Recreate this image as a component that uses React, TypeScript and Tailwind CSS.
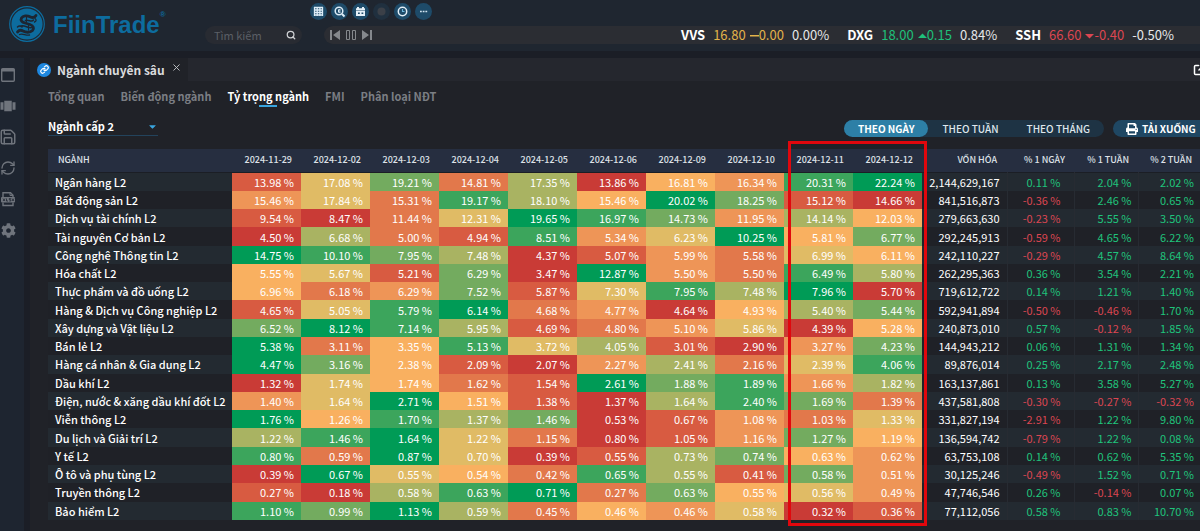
import { useState } from "react";
import { Link, RefreshCw, Save, Search, SquareArrowOutUpRight, X } from "lucide-react";
import { FaCaretDown, FaCog, FaPrint } from "react-icons/fa";
import { MdViewCarousel } from "react-icons/md";
import clsx from "clsx";

type Sector = {
  name: string;
  weights: number[];
  cap: string;
  changes: [number, number, number];
};

type Quote = {
  symbol: string;
  price: string;
  change: string;
  percent: string;
  trend: "up" | "down" | "flat";
};

const DATES = [
  "2024-11-29",
  "2024-12-02",
  "2024-12-03",
  "2024-12-04",
  "2024-12-05",
  "2024-12-06",
  "2024-12-09",
  "2024-12-10",
  "2024-12-11",
  "2024-12-12",
];

// highest weight of the row first
const HEAT = [
  "bg-[#009b56]",
  "bg-[#3ca55c]",
  "bg-[#73ab5f]",
  "bg-[#a9b362]",
  "bg-[#e0bb65]",
  "bg-[#f9b060]",
  "bg-[#ee9557]",
  "bg-[#e2784b]",
  "bg-[#d85b41]",
  "bg-[#c93b36]",
];

const SECTORS: Sector[] = [
  { name: "Ngân hàng L2", weights: [13.98, 17.08, 19.21, 14.81, 17.35, 13.86, 16.81, 16.34, 20.31, 22.24], cap: "2,144,629,167", changes: [0.11, 2.04, 2.02] },
  { name: "Bất động sản L2", weights: [15.458, 17.84, 15.31, 19.17, 18.1, 15.462, 20.02, 18.25, 15.12, 14.66], cap: "841,516,873", changes: [-0.36, 2.46, 0.65] },
  { name: "Dịch vụ tài chính L2", weights: [9.54, 8.47, 11.44, 12.31, 19.65, 16.97, 14.73, 11.95, 14.14, 12.03], cap: "279,663,630", changes: [-0.23, 5.55, 3.5] },
  { name: "Tài nguyên Cơ bản L2", weights: [4.5, 6.68, 5, 4.94, 8.51, 5.34, 6.23, 10.25, 5.81, 6.77], cap: "292,245,913", changes: [-0.59, 4.65, 6.22] },
  { name: "Công nghệ Thông tin L2", weights: [14.75, 10.1, 7.95, 7.48, 4.37, 5.07, 5.99, 5.58, 6.99, 6.11], cap: "242,110,227", changes: [-0.29, 4.57, 8.64] },
  { name: "Hóa chất L2", weights: [5.55, 5.67, 5.21, 6.29, 3.47, 12.87, 5.5, 5.5, 6.49, 5.8], cap: "262,295,363", changes: [0.36, 3.54, 2.21] },
  { name: "Thực phẩm và đồ uống L2", weights: [6.96, 6.18, 6.29, 7.52, 5.87, 7.3, 7.95, 7.48, 7.96, 5.7], cap: "719,612,722", changes: [0.14, 1.21, 1.4] },
  { name: "Hàng & Dịch vụ Công nghiệp L2", weights: [4.65, 5.05, 5.79, 6.14, 4.68, 4.77, 4.64, 4.93, 5.4, 5.44], cap: "592,941,894", changes: [-0.5, -0.46, 1.7] },
  { name: "Xây dựng và Vật liệu L2", weights: [6.52, 8.12, 7.14, 5.95, 4.69, 4.8, 5.1, 5.86, 4.39, 5.28], cap: "240,873,010", changes: [0.57, -0.12, 1.85] },
  { name: "Bán lẻ L2", weights: [5.38, 3.11, 3.35, 5.13, 3.72, 4.05, 3.01, 2.9, 3.27, 4.23], cap: "144,943,212", changes: [0.06, 1.31, 1.34] },
  { name: "Hàng cá nhân & Gia dụng L2", weights: [4.47, 3.16, 2.38, 2.09, 2.07, 2.27, 2.41, 2.16, 2.39, 4.06], cap: "89,876,014", changes: [0.25, 2.17, 2.48] },
  { name: "Dầu khí L2", weights: [1.32, 1.74, 1.74, 1.62, 1.54, 2.61, 1.88, 1.89, 1.66, 1.82], cap: "163,137,861", changes: [0.13, 3.58, 5.27] },
  { name: "Điện, nước & xăng dầu khí đốt L2", weights: [1.4, 1.638, 2.71, 1.51, 1.38, 1.37, 1.642, 2.4, 1.69, 1.39], cap: "437,581,808", changes: [-0.3, -0.27, -0.32] },
  { name: "Viễn thông L2", weights: [1.76, 1.26, 1.7, 1.37, 1.46, 0.53, 0.67, 1.08, 1.03, 1.33], cap: "331,827,194", changes: [-2.91, 1.22, 9.8] },
  { name: "Du lịch và Giải trí L2", weights: [1.22, 1.46, 1.64, 1.22, 1.15, 0.8, 1.05, 1.16, 1.27, 1.19], cap: "136,594,742", changes: [-0.79, 1.22, 0.08] },
  { name: "Y tế L2", weights: [0.8, 0.59, 0.87, 0.7, 0.39, 0.55, 0.73, 0.74, 0.63, 0.62], cap: "63,753,108", changes: [0.14, 0.62, 5.35] },
  { name: "Ô tô và phụ tùng L2", weights: [0.39, 0.67, 0.548, 0.54, 0.42, 0.65, 0.552, 0.41, 0.58, 0.51], cap: "30,125,246", changes: [-0.49, 1.52, 0.71] },
  { name: "Truyền thông L2", weights: [0.268, 0.18, 0.58, 0.63, 0.71, 0.272, 0.63, 0.55, 0.56, 0.49], cap: "47,746,546", changes: [0.26, -0.14, 0.07] },
  { name: "Bảo hiểm L2", weights: [1.1, 0.99, 1.13, 0.59, 0.45, 0.46, 0.46, 0.58, 0.32, 0.36], cap: "77,112,056", changes: [0.58, 0.83, 10.7] },
];

const QUOTES: Quote[] = [
  { symbol: "VVS", price: "16.80", change: "0.00", percent: "0.00%", trend: "flat" },
  { symbol: "DXG", price: "18.00", change: "0.15", percent: "0.84%", trend: "up" },
  { symbol: "SSH", price: "66.60", change: "-0.40", percent: "-0.50%", trend: "down" },
];

const TABS = ["Tổng quan", "Biến động ngành", "Tỷ trọng ngành", "FMI", "Phân loại NĐT"];
const PERIODS = ["THEO NGÀY", "THEO TUẦN", "THEO THÁNG"];

function heatClasses(weights: number[]) {
  const order = weights.map((_, i) => i).sort((a, b) => weights[b] - weights[a]);
  return weights.map((_, i) => HEAT[order.indexOf(i)]);
}

function Logo() {
  return (
    <a href="#" className="flex items-center gap-2 text-[#0d6c9e]">
      <svg viewBox="0 0 36 36" className="size-9">
        <circle cx="18" cy="18" r="17.3" fill="none" stroke="currentColor" strokeWidth="1.2" />
        <circle cx="18" cy="18" r="15.6" fill="currentColor" />
        <g fill="none" stroke="#1d2632" strokeLinecap="round" strokeLinejoin="round">
          <path d="M27 9.500c-1.500 2.500-4 2.200-6 1.200-3-1.500-7-1.200-8.500 1.300-1.300 2.300.5 4.200 3.500 5l5 1.500c3.500 1.200 4.500 4 2.500 6-2.500 2.500-7 2-9.500.5-2-1.200-4-.8-5.500 1" strokeWidth="2.800" />
          <path d="M24.500 14c-2 2.500-4.500-.5-8 .5M12 20c4-1 7 2.500 11 1.500M8.500 21c1.500-1.500 3.500-1 4.500 0" strokeWidth="1.500" />
          <path d="M10.500 28.500c3-1.500 6 1.200 10 .5M26 12.500c1.500 1 1.500 3-.5 3.500" strokeWidth="1.300" />
          <path d="M17.500 11v5M19.500 19v5" strokeWidth="1.100" />
        </g>
      </svg>
      <span className="flex items-start pt-[2px] font-['Liberation_Sans',Arial,sans-serif] text-2xl leading-8 font-bold">
        FiinTrade
        <sup className="top-0 text-[8px] leading-3">®</sup>
      </span>
    </a>
  );
}

function QuickButtons() {
  const glyphs = [
    {
      label: "Bảng giá",
      icon: <path d="M4 4.500h9M4 7h9M4 9.500h9M4 12h9M4.500 4v9M7.200 4v9M9.900 4v9M12.500 4v9" stroke="#dcecf7" strokeWidth="1.300" />,
    },
    {
      label: "Tra cứu",
      icon: (
        <g fill="none" stroke="#dcecf7">
          <circle cx="8" cy="8" r="3.800" strokeWidth="1.500" />
          <path d="M11 11l2.500 2.500" strokeWidth="2" />
          <path d="M9.500 6.700H7.500v2.600h2M8 8h1.500" strokeWidth="1" />
        </g>
      ),
    },
    {
      label: "Lịch sự kiện",
      icon: (
        <g>
          <path d="M5 4h2v1.200h3V4h2v1.200h1V7H4V5.200h1zM4 7.500h9V13H4z" fill="#e4f0f8" />
          <path d="M6 9.500h1.800v1.500H6zM9.500 9.500h1.800v1.500H9.500z" fill="#1e4b69" />
        </g>
      ),
    },
    { label: "Cảnh báo", icon: <circle cx="8.500" cy="8.500" r="4" fill="#3b4048" />, off: true },
    {
      label: "Lịch sử",
      icon: (
        <g fill="none" stroke="#e4f0f8">
          <circle cx="8.500" cy="8.500" r="4.200" strokeWidth="1.500" />
          <path d="M8.500 6v2.500h2" stroke="#6fb9df" strokeWidth="1.100" />
        </g>
      ),
    },
    { label: "Thêm", icon: <path d="M5 7.800h1.800v1.500H5zM7.700 7.800h1.800v1.500H7.700zM10.400 7.800h1.800v1.500h-1.800z" fill="#cfe3f0" /> },
  ];
  return (
    <div className="flex gap-1">
      {glyphs.map((g) => (
        <button
          key={g.label}
          aria-label={g.label}
          className={clsx("size-[17px] rounded-full", g.off ? "bg-[#20303f]" : "bg-[#1e4b69]")}
        >
          <svg viewBox="0 0 17 17" className="size-[17px]">
            {g.icon}
          </svg>
        </button>
      ))}
    </div>
  );
}

function PlayerButtons() {
  return (
    <div className="flex items-center gap-1 text-[#85888d]">
      <button aria-label="Trước">
        <svg viewBox="0 0 12 12" className="size-3" fill="currentColor">
          <path d="M1 1h2v10H1zM11 1v10L4 6z" />
        </svg>
      </button>
      <button aria-label="Tạm dừng">
        <svg viewBox="0 0 12 12" className="size-3" fill="none" stroke="currentColor">
          <path d="M1.500 1.500h3v9h-3zM7.500 1.500h3v9h-3z" />
        </svg>
      </button>
      <button aria-label="Sau">
        <svg viewBox="0 0 12 12" className="size-3" fill="currentColor">
          <path d="M9 1h2v10H9zM1 1v10l7-5z" />
        </svg>
      </button>
    </div>
  );
}

function TrendMark({ trend }: { trend: Quote["trend"] }) {
  return (
    <svg viewBox="0 0 9 9" className="inline-block size-[9px]" fill="currentColor">
      {trend === "up" && <path d="M4.500 2.500L9 7H0z" />}
      {trend === "down" && <path d="M0 3h9L4.500 7.500z" />}
      {trend === "flat" && <path d="M0 4h9v1.500H0z" />}
    </svg>
  );
}

function Ticker() {
  return (
    <div className="flex h-[18px] flex-1 items-center justify-between rounded-l-full bg-[#2b2d33] pr-[26px] pl-[5px]">
      <PlayerButtons />
      <div className="flex gap-[18px] text-[13px] leading-[18px]">
        {QUOTES.map((q) => (
          <div key={q.symbol} className="flex gap-2 text-[#e6e7e9]">
            <span className="font-bold text-white">{q.symbol}</span>
            <span
              className={clsx(
                "flex items-center",
                q.trend === "up" && "text-[#1fc07a]",
                q.trend === "down" && "text-[#dc4651]",
                q.trend === "flat" && "text-[#e3b34a]"
              )}
            >
              <span className="mr-1">{q.price}</span>
              <TrendMark trend={q.trend} />
              {q.change}
            </span>
            <span>{q.percent}</span>
          </div>
        ))}
      </div>
    </div>
  );
}

function Header() {
  return (
    <header className="flex h-[51px] shrink-0 bg-[#1f2630] pl-[9px]">
      <div className="flex w-[196px] shrink-0 items-start pt-[6px]">
        <Logo />
      </div>
      <div className="flex flex-1 flex-col pt-[3px]">
        <div className="pl-[105px]">
          <QuickButtons />
        </div>
        <div className="mt-[6px] flex">
          <label className="mr-[22px] flex h-[18px] w-[97px] items-center rounded-full bg-[#282b32] pr-[6px] pl-[9px]">
            <input
              type="text"
              aria-label="Tìm kiếm"
              placeholder="Tìm kiếm"
              className="w-full min-w-0 bg-transparent text-[11px] leading-4 text-white outline-none placeholder:text-[#5b5f66]"
            />
            <Search className="size-[10px] shrink-0 text-[#d0d2d5]" strokeWidth={3} />
          </label>
          <Ticker />
        </div>
      </div>
    </header>
  );
}

function WindowIcon() {
  return (
    <svg viewBox="0 0 16 16" className="size-4" fill="none" stroke="currentColor">
      <rect x="1.700" y="1.700" width="12.600" height="12.600" rx="1" strokeWidth="1.400" />
      <path d="M1.500 3.200h13" strokeWidth="2.600" />
    </svg>
  );
}

function SheetFileIcon() {
  return (
    <svg viewBox="0 0 16 16" className="size-4" fill="none" stroke="currentColor">
      <path d="M3 6V1.700h7.500L13 4.200V6M3 11.500v3h10v-3" strokeWidth="1.400" />
      <path d="M10 1.500v3h3" />
      <rect x="1" y="6" width="14" height="5.500" rx="1" fill="currentColor" stroke="none" />
      <path d="M3 7.500l2 2.500M5 7.500L3 10M6.500 7.500V10H8M10.800 7.500H9.300v1.200h1.500V10H9.300M12 7.500l2 2.500M14 7.500L12 10" stroke="#1e2530" strokeWidth=".8" />
    </svg>
  );
}

function Sidebar() {
  const items = [
    { label: "Cửa sổ", icon: <WindowIcon /> },
    { label: "Bố cục", icon: <MdViewCarousel className="size-[18px]" /> },
    { label: "Lưu", icon: <Save className="size-[18px]" strokeWidth={2} /> },
    { label: "Làm mới", icon: <RefreshCw className="size-4" strokeWidth={2} /> },
    { label: "Xuất Excel", icon: <SheetFileIcon /> },
    { label: "Cài đặt", icon: <FaCog className="size-[15px]" /> },
  ];
  return (
    <nav className="flex w-6 shrink-0 flex-col gap-[13px] bg-[#1e2530] pt-2 text-[#6f747c]">
      {items.map((item) => (
        <button key={item.label} aria-label={item.label} className="flex h-[18px] w-4 items-center justify-center">
          <span className="shrink-0">{item.icon}</span>
        </button>
      ))}
    </nav>
  );
}

function SectorTable() {
  return (
    <div className="relative flex-1">
      <table className="h-full w-full table-fixed border-collapse text-right text-[11px] leading-[18px] text-white">
        <colgroup>
          <col className="w-[184px]" />
          {DATES.map((d) => (
            <col key={d} className="w-[69px]" />
          ))}
          <col className="w-[85px]" />
          <col className="w-[67px]" />
          <col className="w-[64px]" />
          <col className="w-[62px]" />
        </colgroup>
        <thead>
          <tr className="h-[23px] border-b border-[#1b1e25] bg-[#262e40] text-[9px] whitespace-nowrap text-[#dfe2e8]">
            <th className="pl-[10px] text-left font-medium">NGÀNH</th>
            {DATES.map((d) => (
              <th key={d} className="pr-[9px] font-medium">{d}</th>
            ))}
            <th className="pr-[10px] font-medium">VỐN HÓA</th>
            <th className="pr-[9px] font-medium">% 1 NGÀY</th>
            <th className="pr-[9px] font-medium">% 1 TUẦN</th>
            <th className="pr-2 font-medium">% 2 TUẦN</th>
          </tr>
        </thead>
        <tbody>
          {SECTORS.map((s) => {
            const heat = heatClasses(s.weights);
            return (
              <tr key={s.name} className="whitespace-nowrap odd:bg-[#232a31] even:bg-[#1f2127]">
                <th className="pl-[7px] text-left font-medium">{s.name}</th>
                {s.weights.map((w, i) => (
                  <td key={DATES[i]} className={clsx("pr-[7px]", heat[i])}>
                    {w.toFixed(2)} %
                  </td>
                ))}
                <td className="border-r border-[#272b32] pr-[7px]">{s.cap}</td>
                {s.changes.map((c, i) => (
                  <td
                    key={i}
                    className={clsx(
                      i < 2 && "border-r border-[#272b32]",
                      i === 0 ? "pr-[13px]" : "pr-[6px]",
                      c < 0 ? "text-[#dc4651]" : "text-[#1fc47c]"
                    )}
                  >
                    {c.toFixed(2)} %
                  </td>
                ))}
              </tr>
            );
          })}
        </tbody>
      </table>
      {/* frame round the two latest sessions */}
      <div className="pointer-events-none absolute -top-2 -bottom-[6px] left-[740px] w-[139px] border-3 border-[#e1070d]" />
    </div>
  );
}

export default function App() {
  const [tab, setTab] = useState("Tỷ trọng ngành");
  const [period, setPeriod] = useState("THEO NGÀY");

  return (
    <div className="flex h-screen min-h-[531px] flex-col overflow-hidden bg-[#1b1e26] font-['Noto_Sans_CJK_SC',sans-serif] text-white">
      <Header />
      <div className="mt-[7px] flex flex-1">
        <Sidebar />
        <main className="ml-[6px] flex min-w-0 flex-1 flex-col bg-[#202228]">
          <div className="flex h-[23px] justify-between bg-[#25272e]">
            <div className="flex w-[158px] items-center bg-[#202228] pl-[7px]">
              <span className="flex size-[14px] shrink-0 items-center justify-center rounded-full bg-[#1e88e0]">
                <Link className="size-[9px]" strokeWidth={3} />
              </span>
              <span className="ml-[6px] text-xs leading-5 font-bold whitespace-nowrap text-[#dadbdd]">
                Ngành chuyên sâu
              </span>
              <button aria-label="Đóng" className="mb-1 ml-[6px]">
                <X className="size-[11px] text-[#c4c6c9]" strokeWidth={2} />
              </button>
            </div>
            <button aria-label="Mở cửa sổ mới" className="-mr-[5px]">
              <SquareArrowOutUpRight className="size-3" strokeWidth={3} />
            </button>
          </div>
          <div className="flex gap-4 pt-[6px] pl-[18px] text-[11px] leading-[18px] font-bold">
            {TABS.map((t) => (
              <button
                key={t}
                onClick={() => setTab(t)}
                className={clsx("flex flex-col items-center", t === tab ? "text-white" : "text-[#7b7e84]")}
              >
                {t}
                {t === tab && <span className="h-[2px] w-[18px] bg-[#39a5de]" />}
              </button>
            ))}
          </div>
          <div className="mt-[10px] flex items-start justify-between pl-[18px]">
            <div className="relative flex w-[110px] items-center border-b border-[#23435c]">
              <select
                aria-label="Cấp ngành"
                defaultValue="2"
                className="h-[18px] w-full appearance-none bg-transparent text-[11px] font-bold outline-none"
              >
                <option value="1">Ngành cấp 1</option>
                <option value="2">Ngành cấp 2</option>
                <option value="3">Ngành cấp 3</option>
              </select>
              <FaCaretDown className="pointer-events-none absolute right-0 size-[11px] text-[#39a5de]" />
            </div>
            <div className="mt-[3px] flex gap-[9px] text-[10px] leading-[17px]">
              <div className="flex rounded-full bg-[#1e3344]">
                {PERIODS.map((p) => (
                  <button
                    key={p}
                    onClick={() => setPeriod(p)}
                    className={clsx(
                      "rounded-full px-[14px] whitespace-nowrap",
                      p === period ? "bg-[#2d7fa6] font-bold" : "font-medium text-[#dfe6ec]"
                    )}
                  >
                    {p}
                  </button>
                ))}
              </div>
              <button className="flex w-[87px] items-center gap-1 rounded-l-full bg-[#1f4763] pl-[13px] font-bold whitespace-nowrap">
                <FaPrint className="size-3 shrink-0" />
                TẢI XUỐNG
              </button>
            </div>
          </div>
          <div className="flex flex-1 flex-col pt-3 pb-[11px] pl-[18px]">
            <SectorTable />
          </div>
        </main>
      </div>
    </div>
  );
}
